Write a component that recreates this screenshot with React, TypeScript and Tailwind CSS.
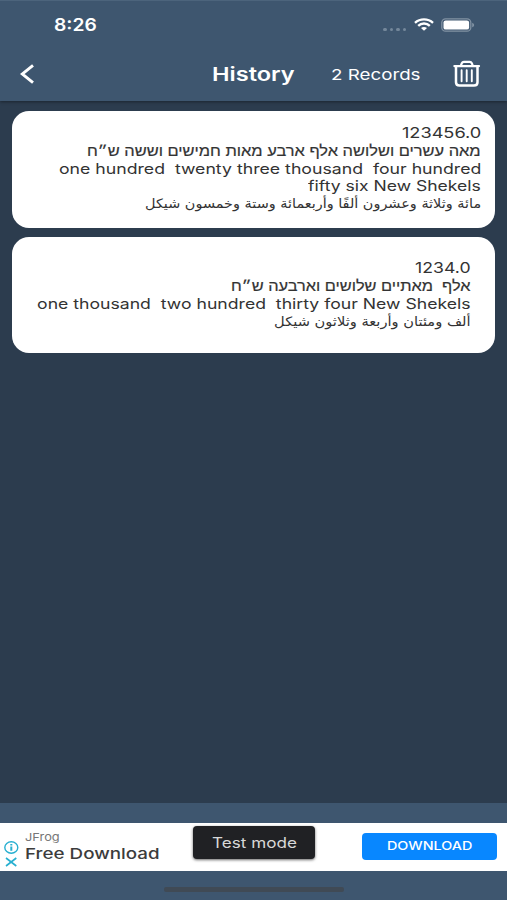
import { useLayoutEffect, useRef, useState } from "react";
import clsx from "clsx";

type FitProps = {
  text: string;
  width: number;
  className?: string;
  rtl?: boolean;
  end?: boolean;
};

// A single line of text, stretched horizontally to fill the given width.
function Fit({ text, width, className, rtl, end }: FitProps) {
  const ref = useRef<HTMLSpanElement>(null);
  const [scale, setScale] = useState(1);
  useLayoutEffect(() => {
    if (ref.current) setScale(width / ref.current.offsetWidth);
  }, [text, width]);
  return (
    <div className={clsx("flex shrink-0", end ? "justify-end" : "justify-start", className)} style={{ width }}>
      <span
        ref={ref}
        dir={rtl ? "rtl" : "ltr"}
        className={clsx("block shrink-0 whitespace-pre", end ? "origin-right" : "origin-left")}
        style={{ transform: `scaleX(${scale})` }}
      >
        {text}
      </span>
    </div>
  );
}

const latin = "font-['Inter',sans-serif] text-[14.5px]";
const hebrew = "font-['Liberation_Sans','DejaVu_Sans',sans-serif] text-[14.5px] [-webkit-text-stroke:0.2px_#333]";
const arabic = "font-['DejaVu_Sans',sans-serif] text-[13px]";

function StatusBar() {
  return (
    <div className="flex h-12 items-center pl-[54px] pr-[32px]">
      <Fit text="8:26" width={43} className="pt-px text-[17px] font-semibold" />
      <div className="ml-auto flex items-center">
        <div className="mt-[8px] mr-[8px] flex gap-[3px]">
          {[0, 1, 2, 3].map((i) => (
            <span key={i} className="h-[3px] w-[3.5px] rounded-full bg-[#75889b]" />
          ))}
        </div>
        <svg className="-mt-px" width="20" height="13" viewBox="0 0 20 13" fill="none" stroke="#fff" strokeWidth="2.4">
          <path d="M1 4.8C6 .2 14 .2 19 4.8" />
          <path d="M4.2 7.8C7.4 4.8 12.6 4.8 15.8 7.8" />
          <path d="M7 10.1C8.7 8.5 11.3 8.5 13 10.1L10 12.8Z" fill="#fff" stroke="none" />
        </svg>
        <svg className="-mt-px ml-[7px]" width="34" height="14" viewBox="0 0 34 14">
          <rect x=".8" y=".8" width="29" height="12.4" rx="3.8" fill="none" stroke="#8192a3" strokeWidth="1.3" />
          <rect x="2.5" y="2.4" width="25.6" height="9.2" rx="2.2" fill="#fff" />
          <path d="M31.2 4.7c2.6 1 2.6 3.6 0 4.6Z" fill="#8192a3" />
        </svg>
      </div>
    </div>
  );
}

function TrashIcon() {
  return (
    <svg width="28" height="28" viewBox="0 0 28 28" fill="none" stroke="#fff" strokeLinecap="round" strokeLinejoin="round">
      <path d="M1.4 6.1H26" strokeWidth="2.3" />
      <path d="M7.8 5.8L8.8 3.2Q9.4 1.9 10.9 1.9H16.7Q18.2 1.9 18.8 3.2L19.8 5.8" strokeWidth="2.2" />
      <path d="M3 6.5V22.2Q3 25.6 6.5 25.6H21Q24.5 25.6 24.5 22.2V6.5" strokeWidth="2.5" />
      <path d="M8.6 10.2V21.2M13.7 10.2V21.2M18.8 10.2V21.2" strokeWidth="1.9" />
    </svg>
  );
}

export default function App() {
  return (
    <div className="flex h-[900px] w-[507px] flex-col overflow-hidden bg-[#2c3c4e] font-['Inter',sans-serif]">
      <header className="h-[101px] shrink-0 border-t border-[#4c647c] bg-[#3e566f] text-white shadow-[0_1px_3px_rgba(0,0,0,0.4)]">
        <StatusBar />
        <div className="flex h-[50px] items-center pl-[20px]">
          <svg width="14" height="20" viewBox="0 0 14 20" fill="none" stroke="#fff" strokeWidth="2.9">
            <path d="M13 1.3L2.2 10L13 18.7" />
          </svg>
          <Fit text="History" width={83} className="ml-[178px] pt-[2px] text-[19px] font-semibold" />
          <Fit text="2 Records" width={90} className="ml-[36px] pt-[2px] text-[15px]" />
          <div className="ml-[32px]">
            <TrashIcon />
          </div>
        </div>
      </header>

      <main className="flex flex-1 flex-col gap-[9.5px] pt-[9.5px] pr-[12px] pl-[12px] text-[#333]">
        <section className="flex h-[117px] flex-col items-end rounded-[17px] bg-white pt-[13.5px] pr-[14px] leading-[18px]">
          <Fit end text="123456.0" width={79} className={clsx("h-[18px]", latin)} />
          <Fit end rtl text="מאה עשרים ושלושה אלף ארבע מאות חמישים וששה ש״ח" width={394} className={clsx("h-[18px]", hebrew)} />
          <Fit end text="one hundred  twenty three thousand  four hundred" width={422} className={clsx("h-[17px]", latin)} />
          <Fit end text="fifty six New Shekels" width={173} className={clsx("h-[18px]", latin)} />
          <Fit end rtl text="مائة وثلاثة وعشرون ألفًا وأربعمائة وستة وخمسون شيكل" width={336} className={clsx("h-[18px]", arabic)} />
        </section>
        <section className="flex h-[116px] flex-col items-end rounded-[17px] bg-white pt-[22px] pr-[24px] leading-[18px]">
          <Fit end text="1234.0" width={56} className={clsx("h-[18px]", latin)} />
          <Fit end rtl text="אלף  מאתיים שלושים וארבעה ש״ח" width={240} className={clsx("h-[18px]", hebrew)} />
          <Fit end text="one thousand  two hundred  thirty four New Shekels" width={434} className={clsx("h-[18px]", latin)} />
          <Fit end rtl text="ألف ومئتان وأربعة وثلاثون شيكل" width={197} className={clsx("h-[18px]", arabic)} />
        </section>
      </main>

      <footer className="flex h-[97px] shrink-0 flex-col items-center bg-[#3e566f] pt-[20px]">
        <div className="flex h-[48px] w-full bg-white">
          <div className="flex w-[25px] flex-col items-start gap-[3px] pt-[18px] pl-[4px]">
            <svg width="15" height="13" viewBox="0 0 15 13" fill="none" stroke="#27afd0">
              <ellipse cx="7.3" cy="6.5" rx="6.5" ry="5.7" strokeWidth="1.4" />
              <path d="M7.3 5.4V9.8M7.3 2.9V4.4" strokeWidth="2" />
            </svg>
            <svg width="15" height="10" viewBox="0 0 15 10" fill="none" stroke="#27afd0" strokeWidth="1.6">
              <path d="M2 1L12.3 9M12.3 1L2 9" />
            </svg>
          </div>
          <div className="w-[168px] pt-[7px]">
            <Fit text="JFrog" width={35} className="h-[14px] text-[11px] leading-[14px] text-[#777]" />
            <Fit text="Free Download" width={134} className="h-[19px] text-[15px] leading-[19px] font-medium text-[#3c3c3c]" />
          </div>
          <div className="mt-[3px] flex h-[33px] w-[122px] items-center justify-center rounded-[4px] bg-[#202124] shadow-[0_1px_3px_rgba(0,0,0,0.6)]">
            <Fit text="Test mode" width={85} className="text-[14.5px] text-[#d8d8d8]" />
          </div>
          <div className="mt-[10px] ml-[47px] flex h-[27px] w-[135px] items-center justify-center rounded-[4px] bg-[#0887ff]">
            <Fit text="DOWNLOAD" width={85} className="text-[11.5px] font-medium text-white" />
          </div>
        </div>
        <div className="mt-[16px] h-[5px] w-[180px] rounded-[2px] bg-[#404a55]" />
      </footer>
    </div>
  );
}
